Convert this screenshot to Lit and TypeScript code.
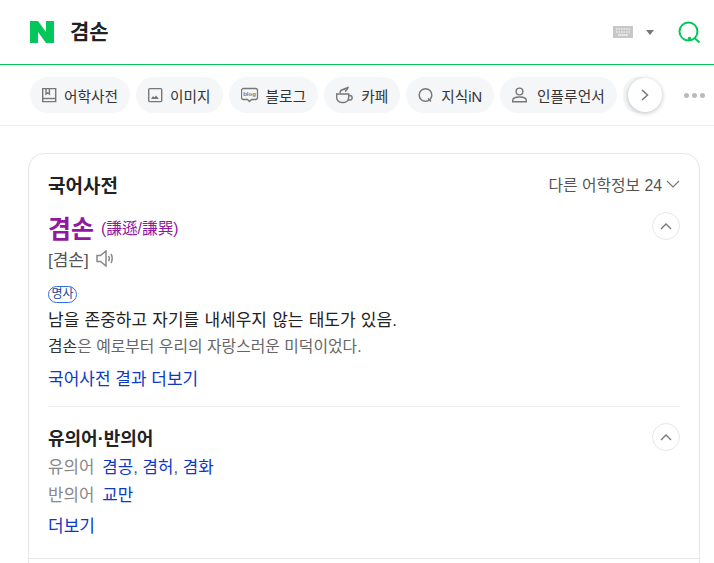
import { LitElement, css, html } from "lit";
import { customElement } from "lit/decorators.js";

const tabIcons = {
  book: html`<svg width="16" height="16" viewBox="0 0 16 16" fill="none" stroke="#777" stroke-width="1.4"><path d="M.7 1.600h13v13H.7z"/><path d="M.7 11.500h13"/><path d="M4 1.600v5.500l1.700-1.300L7.400 7.100V1.600" /></svg>`,
  image: html`<svg width="16" height="16" viewBox="0 0 16 16" fill="none"><rect x="0.700" y="1.600" width="13" height="13" rx="1" stroke="#777" stroke-width="1.400"/><path d="M3 12l2-3 1.300 1.500L8 8.500l3 3.500z" fill="#777"/></svg>`,
  blog: html`<svg width="19" height="16" viewBox="0 0 19 16" fill="none"><path d="M2.500 1.500h12a2 2 0 012 2v7a2 2 0 01-2 2h-4l-2 2-2-2h-4a2 2 0 01-2-2v-7a2 2 0 012-2z" stroke="#777" stroke-width="1.300"/><text x="8.500" y="9.300" text-anchor="middle" font-size="6" font-weight="700" font-family="Liberation Sans, sans-serif" fill="#777">blog</text></svg>`,
  cafe: html`<svg width="19" height="18" viewBox="0 0 19 18" fill="none" stroke="#777" stroke-width="1.400"><path d="M.7 8h12v3.500a5 5 0 01-5 5h-2a5 5 0 01-5-5z"/><path d="M12.700 9.500h1.200a2 2 0 010 4.500h-1.800"/><path d="M4 7c0-2 1-3 3-3.500 2-.500 3-1.500 5-2-.500 2-1 3-3 4"/></svg>`,
  kin: html`<svg width="17" height="16" viewBox="0 0 17 16" fill="none" stroke="#777" stroke-width="1.500"><circle cx="7.500" cy="8" r="6.300"/><path d="M10 11.500l3 3"/></svg>`,
  person: html`<svg width="19" height="16" viewBox="0 0 19 16" fill="none" stroke="#777" stroke-width="1.400"><circle cx="7.500" cy="4.500" r="3.400"/><path d="M.7 14.800v-1.500c0-2 2.500-3.300 6.800-3.300s6.800 1.300 6.800 3.300v1.500z"/></svg>`,
};

const tabs = [
  { label: "어학사전", icon: tabIcons.book },
  { label: "이미지", icon: tabIcons.image },
  { label: "블로그", icon: tabIcons.blog },
  { label: "카페", icon: tabIcons.cafe },
  { label: "지식iN", icon: tabIcons.kin },
  { label: "인플루언서", icon: tabIcons.person },
];

const upButton = html`<button class="fold">
  <svg width="12" height="7" viewBox="0 0 12 7" fill="none" stroke="#777" stroke-width="1.400"><path d="M1 6l5-5 5 5"/></svg>
</button>`;

@customElement("app-root")
export class AppRoot extends LitElement {
  static styles = css`
    :host {
      display: block;
      height: 563px;
      overflow: hidden;
      background: #fff;
      font-family: "Liberation Sans", "Noto Sans CJK KR", sans-serif;
      color: #222;
    }
    a {
      color: #0d3ac4;
      text-decoration: none;
    }
    .search {
      display: flex;
      align-items: center;
      height: 64px;
      padding: 0 13px 0 30px;
      border-bottom: 1px solid #03c75a;
    }
    .query {
      margin-left: 16px;
      flex: 1;
      font-size: 21px;
      font-weight: 700;
      line-height: 24px;
      color: #222;
    }
    .caret {
      margin: 0 24px 0 13px;
      width: 0;
      height: 0;
      border-left: 4.500px solid transparent;
      border-right: 4.500px solid transparent;
      border-top: 5px solid #777;
    }
    .tabs {
      position: relative;
      display: flex;
      gap: 6px;
      height: 61px;
      box-sizing: border-box;
      padding: 12px 0 0 30px;
      border-bottom: 1px solid #eee;
      overflow: hidden;
    }
    .tab {
      display: flex;
      align-items: center;
      flex: none;
      gap: 6px;
      height: 36px;
      padding: 0 12px;
      border-radius: 18px;
      background: #f5f6f8;
      font-size: 14.700px;
      color: #333;
    }
    .stub {
      width: 6px;
    }
    .next {
      position: absolute;
      left: 628px;
      top: 13px;
      display: flex;
      align-items: center;
      justify-content: center;
      width: 34px;
      height: 34px;
      border-radius: 50%;
      background: #fff;
      box-shadow: 0 1px 5px rgba(0, 0, 0, 0.25);
    }
    .more {
      position: absolute;
      left: 684px;
      top: 28px;
      display: flex;
      gap: 3px;
    }
    .more i {
      width: 5px;
      height: 5px;
      border-radius: 50%;
      background: #bbb;
    }
    .card {
      margin: 27px 14px 0 28px;
      border: 1px solid #e6e6e6;
      border-radius: 16px;
      padding: 0 19px;
      height: 500px;
    }
    .head {
      display: flex;
      align-items: center;
      justify-content: space-between;
      padding-top: 18px;
      height: 24px;
    }
    h2 {
      margin: 0;
      font-size: 19px;
      font-weight: 700;
      color: #222;
    }
    .other {
      display: flex;
      align-items: center;
      gap: 4px;
      font-size: 15.800px;
      color: #555;
    }
    .entry {
      position: relative;
      padding-top: 13px;
    }
    .fold {
      position: absolute;
      right: 0;
      top: 16px;
      display: flex;
      align-items: center;
      justify-content: center;
      width: 28px;
      height: 28px;
      padding: 0;
      border: 1px solid #e6e6e6;
      border-radius: 50%;
      background: #fff;
    }
    .word {
      display: flex;
      align-items: center;
      gap: 7px;
      color: #90199f;
    }
    .word b {
      font-size: 25px;
    }
    .word span {
      font-size: 15.700px;
    }
    .pron {
      display: flex;
      align-items: center;
      gap: 7px;
      margin-top: 1px;
      font-size: 17px;
      color: #555;
      height: 24px;
    }
    .pos {
      display: inline-block;
      margin-top: 16px;
      padding: 0 2.500px;
      height: 15px;
      line-height: 15px;
      border: 1px solid #2a6fe0;
      border-radius: 9px;
      font-size: 12px;
      color: #1a3f9c;
    }
    .meaning {
      margin-top: 6px;
      font-size: 17px;
      word-spacing: 0.500px;
      line-height: 24px;
      color: #222;
    }
    .example {
      margin-top: 3px;
      font-size: 15.850px;
      line-height: 22px;
      color: #666;
    }
    .example b {
      font-weight: 400;
      color: #333;
    }
    .link {
      display: block;
      margin-top: 10px;
      font-size: 17px;
      line-height: 24px;
    }
    .sep {
      height: 1px;
      margin-top: 14px;
      background: #eee;
    }
    .syn {
      position: relative;
      padding-top: 20px;
    }
    .syn .fold {
      top: 16px;
    }
    .syn .link {
      margin-top: 7px;
    }
    h3 {
      margin: 0;
      font-size: 18px;
      line-height: 24px;
      font-weight: 700;
      color: #222;
    }
    .row {
      display: flex;
      gap: 8px;
      margin-top: 5px;
      font-size: 16.800px;
      line-height: 24px;
      color: #888;
    }
    .row + .row {
      margin-top: 4px;
    }
    .row a {
      color: #0d3ac4;
    }
    .row em {
      font-style: normal;
      color: #555;
    }
    .foot {
      margin-top: 19px;
      margin-left: -19px;
      margin-right: -19px;
      border-top: 1px solid #e6e6e6;
    }
  `;

  render() {
    return html`
      <div class="search">
        <svg width="24" height="22" viewBox="0 0 24 22"><path d="M0 0h8l8 11V0h8v22h-8L8 11v11H0z" fill="#03c75a"/></svg>
        <div class="query">겸손</div>
        <svg width="20" height="12" viewBox="0 0 20 12"><rect width="20" height="12" fill="#c8c8c8"/><path d="M3 3h14M3 6h14" stroke="#fff" stroke-dasharray="1.500 1"/><path d="M5 9h10" stroke="#fff"/></svg>
        <div class="caret"></div>
        <svg width="23" height="23" viewBox="0 0 23 23" fill="none" stroke="#03c75a" stroke-width="2"><circle cx="10.500" cy="10.500" r="9"/><path d="M16.500 17l5 4.500"/><circle cx="11.500" cy="17.500" r="0.800" fill="#03c75a"/></svg>
      </div>
      <div class="tabs">
        ${tabs.map((t) => html`<div class="tab">${t.icon}<span>${t.label}</span></div>`)}
        <div class="tab stub"></div>
        <div class="next">
          <svg width="8" height="12" viewBox="0 0 8 12" fill="none" stroke="#777" stroke-width="1.500"><path d="M1 1l5.500 5L1 11"/></svg>
        </div>
        <div class="more"><i></i><i></i><i></i></div>
      </div>
      <div class="card">
        <div class="head">
          <h2>국어사전</h2>
          <div class="other">
            다른 어학정보 24
            <svg width="14" height="8" viewBox="0 0 14 8" fill="none" stroke="#777" stroke-width="1.200"><path d="M1 1l6 6 6-6"/></svg>
          </div>
        </div>
        <div class="entry">
          <div class="word"><b>겸손</b><span>(謙遜/謙巽)</span></div>
          ${upButton}
          <div class="pron">
            [겸손]
            <svg width="19" height="17" viewBox="0 0 19 17" fill="none" stroke="#888" stroke-width="1.500"><path d="M1 5.500h3.500L10 1v15l-5.500-4.500H1z"/><path d="M12.500 6c1 1.500 1 3.500 0 5M15 4c1.600 2.400 1.600 6.600 0 9"/></svg>
          </div>
          <div class="pos">명사</div>
          <div class="meaning">남을 존중하고 자기를 내세우지 않는 태도가 있음.</div>
          <div class="example"><b>겸손</b>은 예로부터 우리의 자랑스러운 미덕이었다.</div>
          <a class="link">국어사전 결과 더보기</a>
        </div>
        <div class="sep"></div>
        <div class="syn">
          <h3>유의어·반의어</h3>
          ${upButton}
          <div class="row">유의어 <span><a>겸공</a><em>, </em><a>겸허</a><em>, </em><a>겸화</a></span></div>
          <div class="row">반의어 <a>교만</a></div>
          <a class="link">더보기</a>
        </div>
        <div class="foot"></div>
      </div>
    `;
  }
}
